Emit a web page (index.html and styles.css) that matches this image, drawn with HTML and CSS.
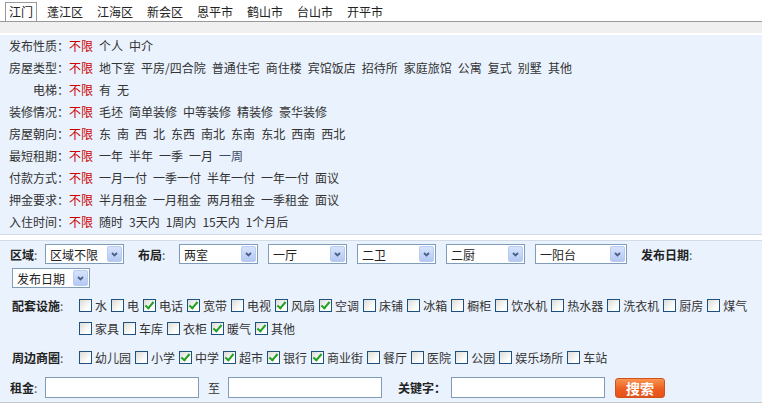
FILE: index.html
```html
<!DOCTYPE html>
<html lang="zh-CN">
<head>
    <meta charset="UTF-8">
    <title>江门租房搜索</title>
    <link rel="stylesheet" href="styles.css">
</head>
<body>
    <!-- 城区标签 -->
    <div class="tabs">
        <a class="on">江门</a><a>蓬江区</a><a>江海区</a><a>新会区</a><a>恩平市</a><a>鹤山市</a><a>台山市</a><a>开平市</a>
    </div>
    <div class="band"></div>

    <!-- 条件筛选 -->
    <div class="filter">
        <div class="row"><span class="lbl">发布性质：</span><span class="any">不限</span><span>个人</span><span>中介</span></div>
        <div class="row"><span class="lbl">房屋类型：</span><span class="any">不限</span><span>地下室</span><span>平房/四合院</span><span>普通住宅</span><span>商住楼</span><span>宾馆饭店</span><span>招待所</span><span>家庭旅馆</span><span>公寓</span><span>复式</span><span>别墅</span><span>其他</span></div>
        <div class="row"><span class="lbl">电梯：</span><span class="any">不限</span><span>有</span><span>无</span></div>
        <div class="row"><span class="lbl">装修情况：</span><span class="any">不限</span><span>毛坯</span><span>简单装修</span><span>中等装修</span><span>精装修</span><span>豪华装修</span></div>
        <div class="row"><span class="lbl">房屋朝向：</span><span class="any">不限</span><span>东</span><span>南</span><span>西</span><span>北</span><span>东西</span><span>南北</span><span>东南</span><span>东北</span><span>西南</span><span>西北</span></div>
        <div class="row"><span class="lbl">最短租期：</span><span class="any">不限</span><span>一年</span><span>半年</span><span>一季</span><span>一月</span><span class="seen">一周</span></div>
        <div class="row"><span class="lbl">付款方式：</span><span class="any">不限</span><span>一月一付</span><span>一季一付</span><span>半年一付</span><span>一年一付</span><span>面议</span></div>
        <div class="row"><span class="lbl">押金要求：</span><span class="any">不限</span><span>半月租金</span><span>一月租金</span><span>两月租金</span><span>一季租金</span><span>面议</span></div>
        <div class="row"><span class="lbl">入住时间：</span><span class="any">不限</span><span>随时</span><span>3天内</span><span>1周内</span><span>15天内</span><span>1个月后</span></div>
    </div>
    <div class="sep"></div>

    <!-- 高级搜索 -->
    <div class="search">
        <div class="line">
            <span class="lab w35"><b>区域</b>:</span>
            <div class="sel gap14"><span>区域不限</span><i><svg width="7" height="5" viewBox="0 0 7 5"><path d="M1 1L3.5 3.5L6 1" fill="none" stroke="#4a5f87" stroke-width="1.8"/></svg></i></div>
            <span class="lab w41"><b>布局</b>:</span>
            <div class="sel"><span>两室</span><i><svg width="7" height="5" viewBox="0 0 7 5"><path d="M1 1L3.5 3.5L6 1" fill="none" stroke="#4a5f87" stroke-width="1.8"/></svg></i></div>
            <div class="sel"><span>一厅</span><i><svg width="7" height="5" viewBox="0 0 7 5"><path d="M1 1L3.5 3.5L6 1" fill="none" stroke="#4a5f87" stroke-width="1.8"/></svg></i></div>
            <div class="sel"><span>二卫</span><i><svg width="7" height="5" viewBox="0 0 7 5"><path d="M1 1L3.5 3.5L6 1" fill="none" stroke="#4a5f87" stroke-width="1.8"/></svg></i></div>
            <div class="sel"><span>二厨</span><i><svg width="7" height="5" viewBox="0 0 7 5"><path d="M1 1L3.5 3.5L6 1" fill="none" stroke="#4a5f87" stroke-width="1.8"/></svg></i></div>
            <div class="sel wide gap14"><span>一阳台</span><i><svg width="7" height="5" viewBox="0 0 7 5"><path d="M1 1L3.5 3.5L6 1" fill="none" stroke="#4a5f87" stroke-width="1.8"/></svg></i></div>
            <span class="lab"><b>发布日期</b>:</span>
        </div>
        <div class="line second">
            <div class="sel short"><span>发布日期</span><i><svg width="7" height="5" viewBox="0 0 7 5"><path d="M1 1L3.5 3.5L6 1" fill="none" stroke="#4a5f87" stroke-width="1.8"/></svg></i></div>
        </div>

        <div class="checks fac">
            <span class="lab"><b>配套设施</b>:</span>
            <div class="list">
                <label class="item"><i class="cb"></i>水</label>
                <label class="item"><i class="cb"></i>电</label>
                <label class="item"><i class="cb on"></i>电话</label>
                <label class="item"><i class="cb on"></i>宽带</label>
                <label class="item"><i class="cb"></i>电视</label>
                <label class="item"><i class="cb on"></i>风扇</label>
                <label class="item"><i class="cb on"></i>空调</label>
                <label class="item"><i class="cb"></i>床铺</label>
                <label class="item"><i class="cb"></i>冰箱</label>
                <label class="item"><i class="cb"></i>橱柜</label>
                <label class="item"><i class="cb"></i>饮水机</label>
                <label class="item"><i class="cb"></i>热水器</label>
                <label class="item"><i class="cb"></i>洗衣机</label>
                <label class="item"><i class="cb"></i>厨房</label>
                <label class="item"><i class="cb"></i>煤气</label>
                <label class="item"><i class="cb"></i>家具</label>
                <label class="item"><i class="cb"></i>车库</label>
                <label class="item"><i class="cb"></i>衣柜</label>
                <label class="item"><i class="cb on"></i>暖气</label>
                <label class="item"><i class="cb on"></i>其他</label>
            </div>
        </div>

        <div class="checks near">
            <span class="lab"><b>周边商圈</b>:</span>
            <div class="list">
                <label class="item"><i class="cb"></i>幼儿园</label>
                <label class="item"><i class="cb"></i>小学</label>
                <label class="item"><i class="cb on"></i>中学</label>
                <label class="item"><i class="cb on"></i>超市</label>
                <label class="item"><i class="cb on"></i>银行</label>
                <label class="item"><i class="cb on"></i>商业街</label>
                <label class="item"><i class="cb"></i>餐厅</label>
                <label class="item"><i class="cb"></i>医院</label>
                <label class="item"><i class="cb"></i>公园</label>
                <label class="item"><i class="cb"></i>娱乐场所</label>
                <label class="item"><i class="cb"></i>车站</label>
            </div>
        </div>

        <div class="line price">
            <span class="lab w35"><b>租金</b>:</span>
            <div class="txt"></div>
            <span class="to">至</span>
            <div class="txt"></div>
            <span class="lab kw"><b>关键字：</b></span>
            <div class="txt"></div>
            <div class="btn">搜索</div>
        </div>
    </div>
</body>
</html>
```

FILE: styles.css
```css
* {
    margin: 0;
    padding: 0;
    box-sizing: border-box;
}

body {
    font-family: "Noto Sans CJK SC", "Liberation Sans", sans-serif;
    font-size: 12px;
    color: #333;
    background: #fff;
    width: 762px;
}

/* 城区标签 */
.tabs {
    display: flex;
    height: 22px;
    padding-left: 5px;
    border-bottom: 1px solid #999;
}

.tabs a {
    margin-top: 2px;
    height: 19px;
    line-height: 17px;
    padding: 0 3px;
    color: #222;
    border: 1px solid transparent;
    border-bottom: none;
}

.tabs a + a {
    margin-left: 6px;
}

.tabs a.on {
    border-color: #999;
    background: #fff;
}

.band {
    height: 13px;
    background: #f0f0f0;
    border-bottom: 2px solid #fff;
}

/* 条件筛选 */
.filter {
    background: #eaf2fd;
    padding: 0 0 1px 8px;
}

.row {
    display: flex;
    height: 22px;
    line-height: 22px;
}

.row span {
    margin-right: 6px;
}

.row .lbl {
    width: 61px;
    margin-right: 0;
    text-align: right;
    flex: none;
}

.row .any {
    color: #c00;
    margin-left: 0;
}

.row .seen {
    color: #3a4a6a;
}

.sep {
    height: 7px;
    background: #fff;
    border-top: 1px solid #d3dbe6;
    border-bottom: 1px solid #d3dbe6;
}

/* 高级搜索 */
.search {
    background: #eaf2fd;
    padding: 3px 0 4px;
    border-bottom: 1px solid #c8c8c8;
}

.line {
    display: flex;
    align-items: center;
    height: 20px;
    padding-left: 10px;
}

.line.second {
    margin-top: 4px;
    padding-left: 12px;
}

.lab {
    display: inline-block;
    flex: none;
    color: #555;
}

.lab b {
    color: #222;
}

.w35 { width: 35px; }
.w41 { width: 41px; }

.sel {
    display: flex;
    align-items: center;
    justify-content: space-between;
    width: 79px;
    height: 20px;
    margin-right: 10px;
    padding: 1px 1px 1px 4px;
    border: 1px solid #7f9db9;
    background: #fff;
    color: #222;
    flex: none;
}

.sel.gap14 { margin-right: 14px; }
.sel.wide { width: 92px; }
.sel.short { width: 78px; }

.sel i {
    display: flex;
    align-items: center;
    justify-content: center;
    width: 15px;
    height: 16px;
    border: 1px solid #b8cbf0;
    border-radius: 2px;
    background: linear-gradient(#d6e3fc, #b4c8f3);
}

/* 复选框 */
.checks {
    display: flex;
    margin-top: 6px;
    padding-left: 12px;
}

.checks .lab {
    width: 63px;
    line-height: 23px;
}

.list {
    display: flex;
    flex-wrap: wrap;
    flex: 1;
}

.item {
    display: flex;
    align-items: center;
    height: 23px;
    color: #333;
}

.cb {
    position: relative;
    display: inline-block;
    width: 13px;
    height: 13px;
    margin: 0 3px 0 4px;
    border: 1px solid #1c5180;
    background: linear-gradient(135deg, #dcdcd7, #fff 75%);
}

.cb.on::after {
    content: "";
    position: absolute;
    left: 3px;
    top: 0px;
    width: 3px;
    height: 7px;
    border: solid #21a121;
    border-width: 0 2px 2px 0;
    transform: rotate(40deg);
}

.price {
    margin-top: 8px;
    height: 21px;
}

.txt {
    width: 154px;
    height: 21px;
    border: 1px solid #7f9db9;
    background: #fff;
    flex: none;
}

.to {
    margin: 0 8px 0 9px;
}

.kw {
    margin-left: 16px;
    width: 53px;
}

.btn {
    width: 50px;
    height: 20px;
    margin-left: 10px;
    line-height: 18px;
    text-align: center;
    font-size: 14px;
    font-weight: bold;
    color: #fff;
    border: 1px solid #d0531e;
    border-radius: 3px;
    background: linear-gradient(#fb9450, #ec5e20 55%, #e4521a);
}
```
